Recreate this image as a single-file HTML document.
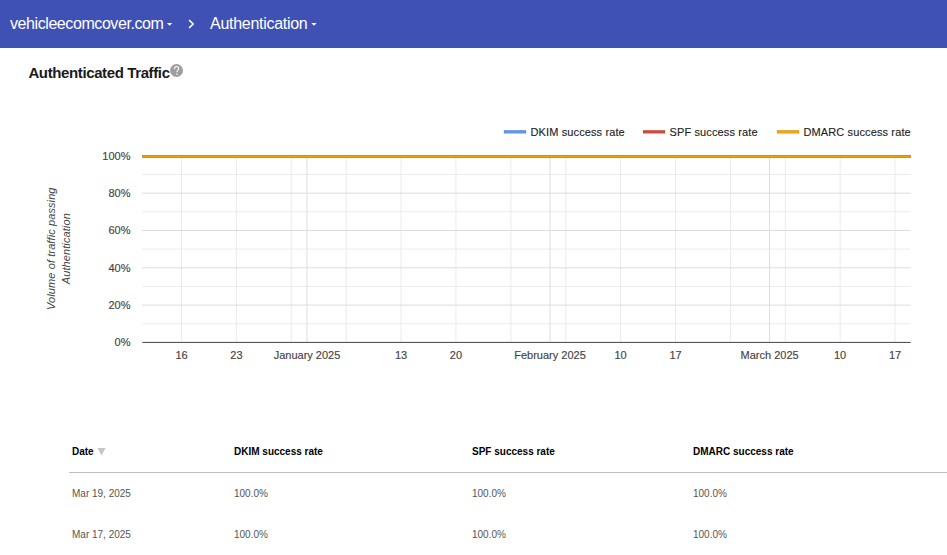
<!DOCTYPE html>
<html><head><meta charset="utf-8">
<style>
html,body{margin:0;padding:0;background:#fff;width:947px;height:555px;overflow:hidden;position:relative;font-family:"Liberation Sans",sans-serif;}
.hdr{position:absolute;left:0;top:0;width:947px;height:48px;background:#3f51b5;}
.hdr .t{position:absolute;top:0;height:48px;line-height:48px;color:#fff;font-size:16px;white-space:nowrap;}
.abs{position:absolute;white-space:nowrap;}
.title{left:28.4px;top:63px;font-size:15px;font-weight:bold;color:#1a1a1a;letter-spacing:-0.38px;line-height:20px;}
.help{position:absolute;left:170px;top:64px;width:13px;height:13px;border-radius:50%;background:#9e9e9e;}
svg{position:absolute;left:0;top:0;}
.th{font-size:10px;font-weight:bold;color:#000;line-height:12px;}
.td{font-size:10px;color:#555;line-height:12px;}
</style></head>
<body>
<div class="hdr">
  <div class="t" style="left:10px;letter-spacing:-0.42px;">vehicleecomcover.com</div>
  <div class="t" style="left:210px;letter-spacing:-0.28px;">Authentication</div>
  <svg width="947" height="48" viewBox="0 0 947 48">
    <path d="M166.9 23 L172.3 23 L169.6 25.8 Z" fill="#fff"/>
    <path d="M311.3 23 L316.7 23 L314 25.8 Z" fill="#fff"/>
    <path d="M189.1 20.1 L193.2 24 L189.1 27.9" fill="none" stroke="#fff" stroke-width="1.5"/>
  </svg>
</div>
<div class="abs title">Authenticated Traffic</div>
<div class="help"><svg width="13" height="13" viewBox="0 0 13 13"><path d="M4.5 4.9 C4.5 3.3 5.5 2.5 6.6 2.5 C7.8 2.5 8.7 3.3 8.7 4.5 C8.7 6.0 6.9 6.2 6.9 8.2" fill="none" stroke="#fff" stroke-width="1.05"/><circle cx="6.9" cy="10.2" r="0.7" fill="#fff"/></svg></div>
<svg width="947" height="555" viewBox="0 0 947 555">
<g font-family="Liberation Sans" font-size="11" fill="#222" letter-spacing="0.12" stroke="#222" stroke-width="0.12">
<rect x="504" y="130.3" width="22" height="3" fill="#5b95f9"/>
<text x="530.5" y="135.8">DKIM success rate</text>
<rect x="643" y="130.3" width="22" height="3" fill="#db4437"/>
<text x="669.5" y="135.8">SPF success rate</text>
<rect x="777" y="130.3" width="22" height="3" fill="#f2a600"/>
<text x="803.5" y="135.8">DMARC success rate</text>
</g>
<g fill="none" stroke-width="1">
<line x1="142.30" y1="323.75" x2="910.71" y2="323.75" stroke="#ebebeb"/>
<line x1="142.30" y1="286.44" x2="910.71" y2="286.44" stroke="#ebebeb"/>
<line x1="142.30" y1="249.12" x2="910.71" y2="249.12" stroke="#ebebeb"/>
<line x1="142.30" y1="211.81" x2="910.71" y2="211.81" stroke="#ebebeb"/>
<line x1="142.30" y1="174.50" x2="910.71" y2="174.50" stroke="#ebebeb"/>
<line x1="181.50" y1="155.85" x2="181.50" y2="342.40" stroke="#ebebeb"/>
<line x1="236.39" y1="155.85" x2="236.39" y2="342.40" stroke="#ebebeb"/>
<line x1="291.27" y1="155.85" x2="291.27" y2="342.40" stroke="#ebebeb"/>
<line x1="346.16" y1="155.85" x2="346.16" y2="342.40" stroke="#ebebeb"/>
<line x1="401.05" y1="155.85" x2="401.05" y2="342.40" stroke="#ebebeb"/>
<line x1="455.94" y1="155.85" x2="455.94" y2="342.40" stroke="#ebebeb"/>
<line x1="510.82" y1="155.85" x2="510.82" y2="342.40" stroke="#ebebeb"/>
<line x1="565.71" y1="155.85" x2="565.71" y2="342.40" stroke="#ebebeb"/>
<line x1="620.60" y1="155.85" x2="620.60" y2="342.40" stroke="#ebebeb"/>
<line x1="675.48" y1="155.85" x2="675.48" y2="342.40" stroke="#ebebeb"/>
<line x1="730.37" y1="155.85" x2="730.37" y2="342.40" stroke="#ebebeb"/>
<line x1="785.26" y1="155.85" x2="785.26" y2="342.40" stroke="#ebebeb"/>
<line x1="840.14" y1="155.85" x2="840.14" y2="342.40" stroke="#ebebeb"/>
<line x1="895.03" y1="155.85" x2="895.03" y2="342.40" stroke="#ebebeb"/>
<line x1="142.30" y1="305.09" x2="910.71" y2="305.09" stroke="#dddddd"/>
<line x1="142.30" y1="267.78" x2="910.71" y2="267.78" stroke="#dddddd"/>
<line x1="142.30" y1="230.47" x2="910.71" y2="230.47" stroke="#dddddd"/>
<line x1="142.30" y1="193.16" x2="910.71" y2="193.16" stroke="#dddddd"/>
<line x1="306.96" y1="155.85" x2="306.96" y2="342.40" stroke="#dddddd"/>
<line x1="550.03" y1="155.85" x2="550.03" y2="342.40" stroke="#dddddd"/>
<line x1="769.58" y1="155.85" x2="769.58" y2="342.40" stroke="#dddddd"/>
<line x1="142.30" y1="342.40" x2="910.71" y2="342.40" stroke="#444"/>
</g>
<g fill="none">
<line x1="142.30" y1="156.5" x2="910.71" y2="156.5" stroke="#5b95f9" stroke-width="3"/>
<line x1="142.30" y1="156.5" x2="910.71" y2="156.5" stroke="#db4437" stroke-width="3" stroke-opacity="0.55"/>
<line x1="142.30" y1="156.5" x2="910.71" y2="156.5" stroke="#f2a600" stroke-width="2.0"/>
</g>
<g font-family="Liberation Sans" font-size="11" fill="#444" stroke="#444" stroke-width="0.15">
<text x="130.5" y="346.2" text-anchor="end">0%</text>
<text x="130.5" y="308.9" text-anchor="end">20%</text>
<text x="130.5" y="271.6" text-anchor="end">40%</text>
<text x="130.5" y="234.3" text-anchor="end">60%</text>
<text x="130.5" y="197.0" text-anchor="end">80%</text>
<text x="130.5" y="159.7" text-anchor="end">100%</text>
<text x="181.5" y="358.6" text-anchor="middle">16</text>
<text x="236.4" y="358.6" text-anchor="middle">23</text>
<text x="307.0" y="358.6" text-anchor="middle">January 2025</text>
<text x="401.0" y="358.6" text-anchor="middle">13</text>
<text x="455.9" y="358.6" text-anchor="middle">20</text>
<text x="550.0" y="358.6" text-anchor="middle">February 2025</text>
<text x="620.6" y="358.6" text-anchor="middle">10</text>
<text x="675.5" y="358.6" text-anchor="middle">17</text>
<text x="769.6" y="358.6" text-anchor="middle">March 2025</text>
<text x="840.1" y="358.6" text-anchor="middle">10</text>
<text x="895.0" y="358.6" text-anchor="middle">17</text>
</g>
<g font-family="Liberation Sans"><g transform="translate(55.1,248.7) rotate(-90)" font-style="italic" fill="#444" font-size="11" letter-spacing="0.1"><text x="0" y="0" text-anchor="middle">Volume of traffic passing</text><text x="0" y="15.2" text-anchor="middle">Authentication</text></g></g>
<path d="M97.5 448 L105.5 448 L101.5 455.5 Z" fill="#c6c6c6"/>
<rect x="69" y="472" width="878" height="1" fill="#bdbdbd"/>
</svg>
<div class="abs th" style="left:72px;top:446px;">Date</div>
<div class="abs th" style="left:234px;top:446px;">DKIM success rate</div>
<div class="abs th" style="left:472px;top:446px;">SPF success rate</div>
<div class="abs th" style="left:693px;top:446px;">DMARC success rate</div>
<div class="abs td" style="left:72px;top:488px;">Mar 19, 2025</div>
<div class="abs td" style="left:234px;top:488px;">100.0%</div>
<div class="abs td" style="left:472px;top:488px;">100.0%</div>
<div class="abs td" style="left:693px;top:488px;">100.0%</div>
<div class="abs td" style="left:72px;top:529px;">Mar 17, 2025</div>
<div class="abs td" style="left:234px;top:529px;">100.0%</div>
<div class="abs td" style="left:472px;top:529px;">100.0%</div>
<div class="abs td" style="left:693px;top:529px;">100.0%</div>
</body></html>
